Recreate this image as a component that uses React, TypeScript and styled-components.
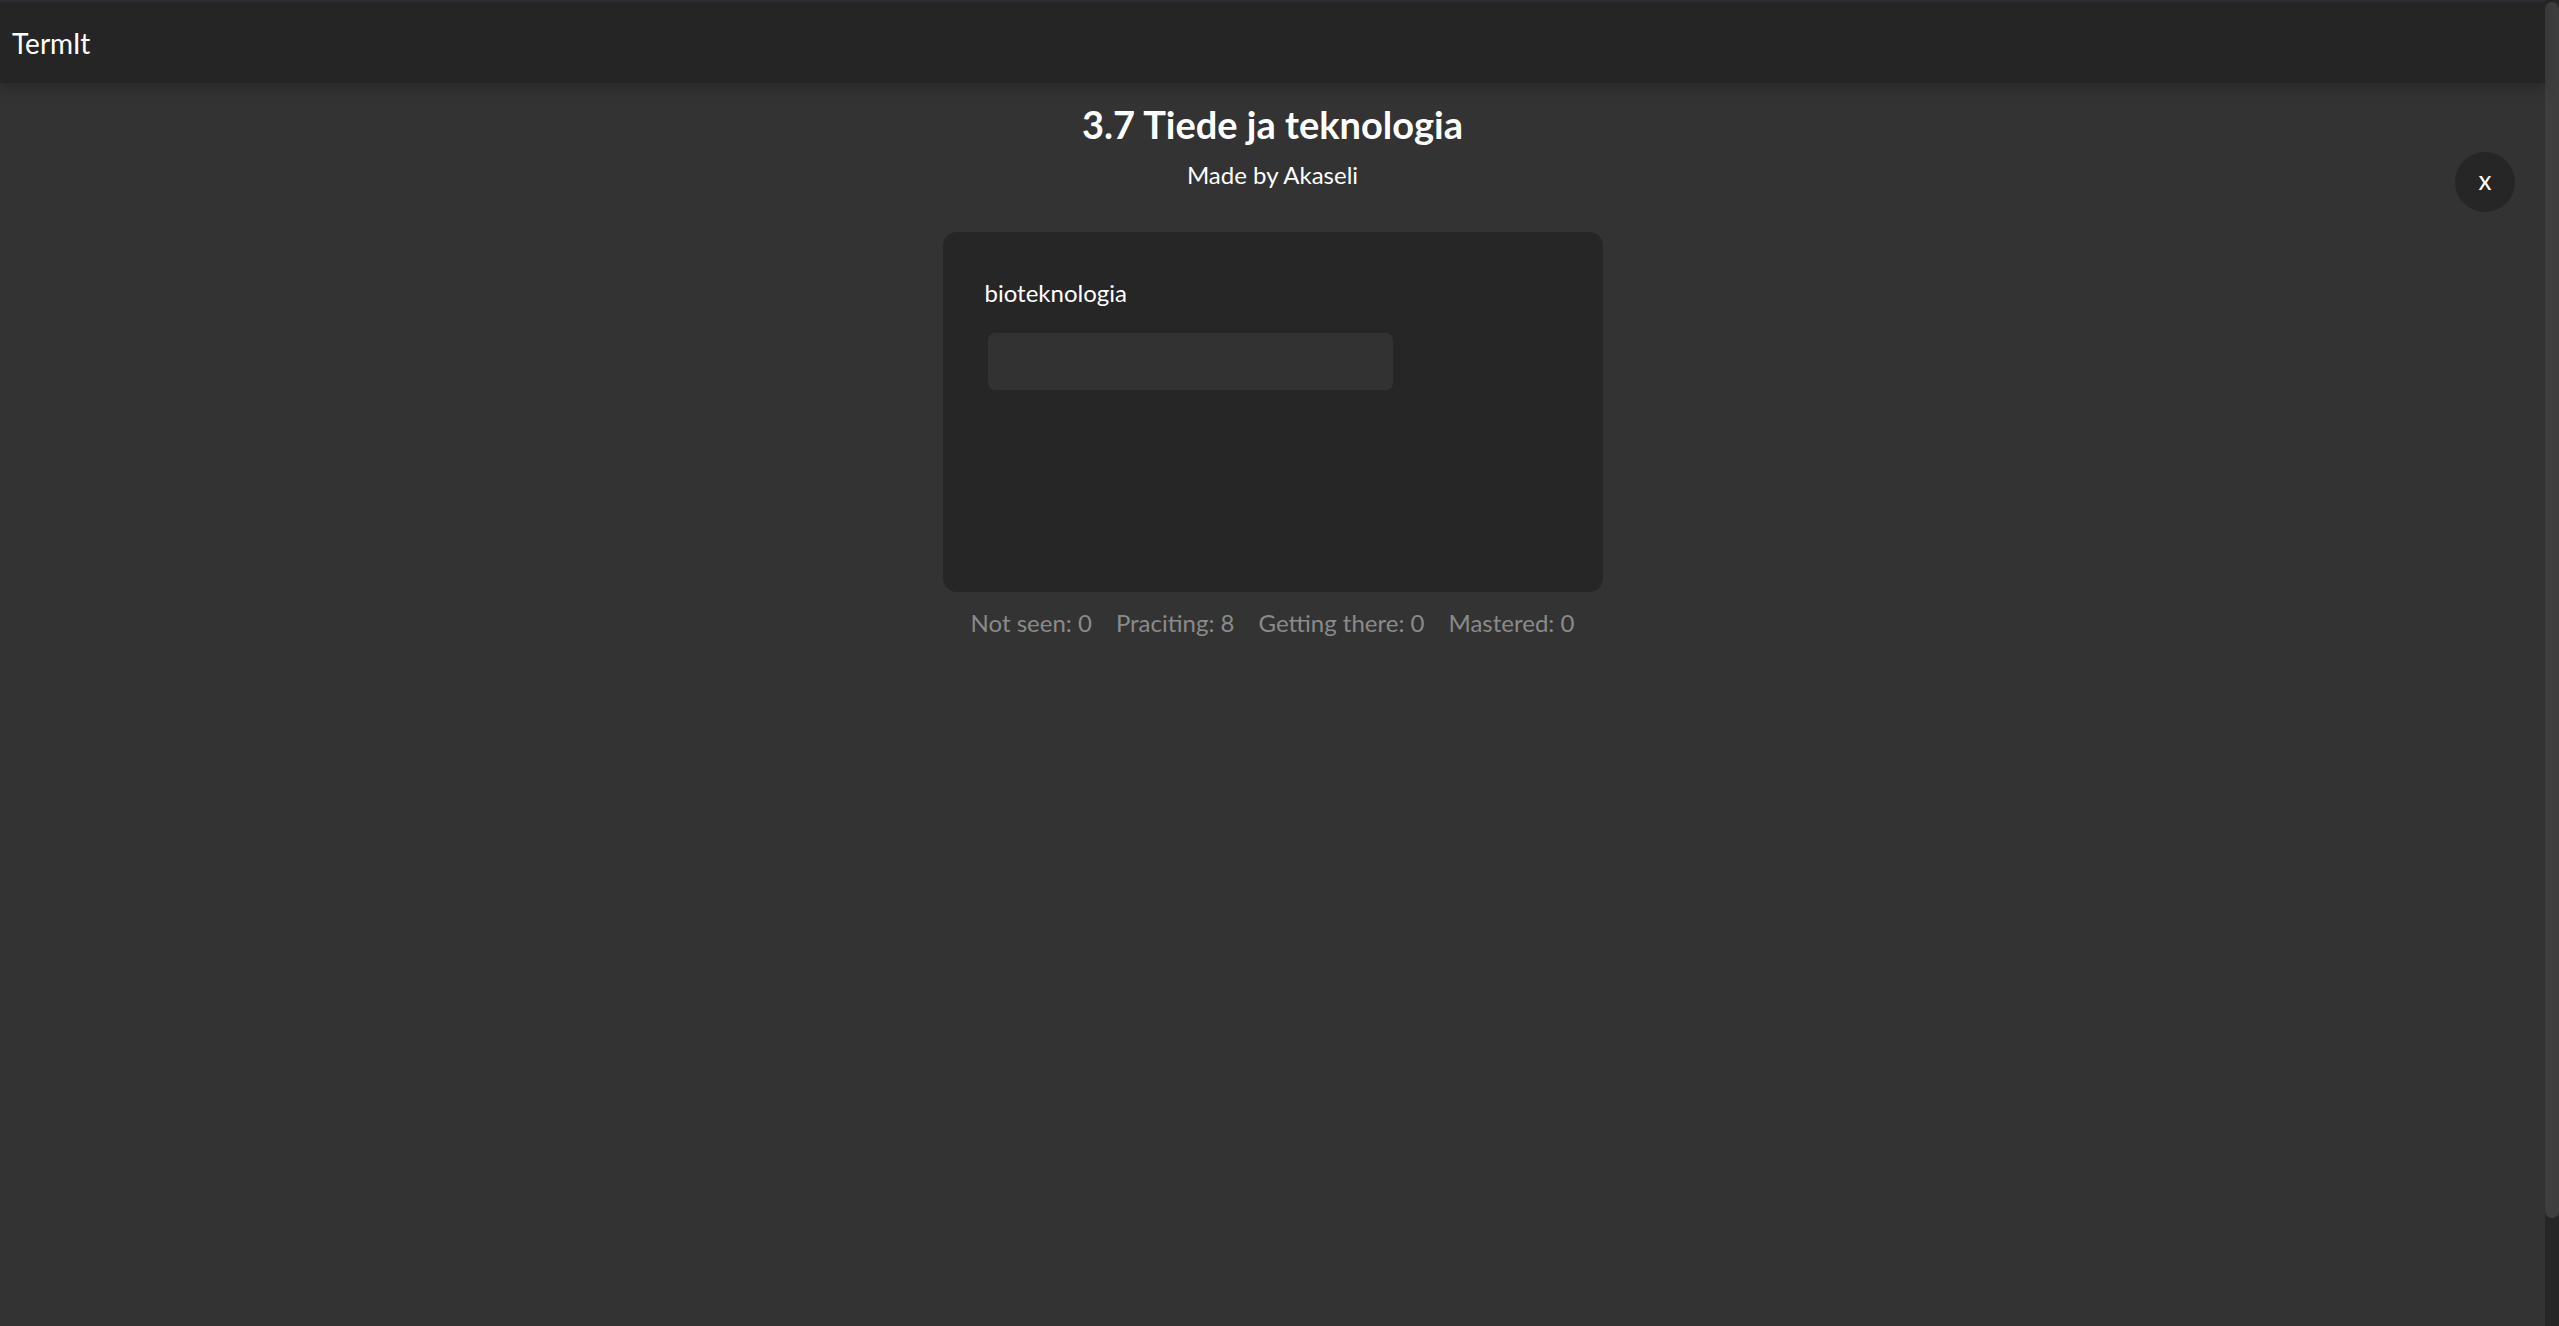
import React, { useState } from 'react';
import styled, { createGlobalStyle } from 'styled-components';

const GlobalStyle = createGlobalStyle`
  html, body {
    margin: 0;
    padding: 0;
    background: #333333;
    font-family: 'Lato', 'Open Sans', sans-serif;
    color: #ffffff;
    overflow: hidden;
  }
`;

const Window = styled.div`
  height: 100vh;
  display: flex;
`;

const Page = styled.div`
  flex: 1;
  display: flex;
  flex-direction: column;
  position: relative;
`;

const Header = styled.header`
  height: 81px;
  background: #252525;
  border-top: 2px solid #2d2d35;
  box-shadow: 0 5px 14px rgba(0, 0, 0, 0.22);
  display: flex;
  align-items: center;
  padding: 0 12px;
  font-size: 28px;
  position: relative;
  z-index: 1;
`;

const Main = styled.main`
  flex: 1;
  display: flex;
  flex-direction: column;
  align-items: center;
  padding-top: 19px;
`;

const Title = styled.h1`
  margin: 0;
  font-size: 38px;
  font-weight: 700;
  line-height: 1.2;
`;

const Subtitle = styled.p`
  margin: 13px 0 0;
  font-size: 24px;
  line-height: 1.2;
`;

const Card = styled.section`
  margin-top: 43px;
  width: 660px;
  height: 360px;
  box-sizing: border-box;
  background: #262626;
  border-radius: 14px;
  padding: 47px 42px;
  display: flex;
  flex-direction: column;
  align-items: flex-start;
`;

const Term = styled.p`
  margin: 0;
  font-size: 24px;
  line-height: 1.2;
`;

const Answer = styled.input`
  margin: 25px 0 0 3px;
  width: 405px;
  height: 57px;
  box-sizing: border-box;
  background: #323232;
  border: none;
  border-radius: 7px;
  outline: none;
  color: #fff;
  font-family: inherit;
  font-size: 22px;
  padding: 0 14px;
`;

const Stats = styled.div`
  margin-top: 17px;
  display: flex;
  gap: 24px;
  font-size: 24px;
  line-height: 1.2;
  color: #8a8a8a;
`;

const CloseButton = styled.button`
  position: absolute;
  top: 152px;
  right: 30px;
  width: 60px;
  height: 60px;
  border-radius: 50%;
  border: none;
  background: #262626;
  color: #fff;
  font-family: inherit;
  font-size: 26px;
  line-height: 1;
  cursor: pointer;
  display: flex;
  align-items: center;
  justify-content: center;
  padding: 0 0 4px;
`;

// page scrollbar, the way the browser draws it in the capture
const ScrollTrack = styled.div`
  width: 14px;
  background: #262626;
  display: flex;
  flex-direction: column;
  padding-top: 2px;
`;

const ScrollThumb = styled.div`
  height: 1216px;
  background: #3e3e3e;
  border-radius: 7px;
`;

const stats = [
  { label: 'Not seen', value: 0 },
  { label: 'Praciting', value: 8 },
  { label: 'Getting there', value: 0 },
  { label: 'Mastered', value: 0 },
];

export default function App() {
  const [answer, setAnswer] = useState('');

  return (
    <Window>
      <GlobalStyle />
      <Page>
        <Header>TermIt</Header>
        <Main>
          <Title>3.7 Tiede ja teknologia</Title>
          <Subtitle>Made by Akaseli</Subtitle>
          <Card>
            <Term>bioteknologia</Term>
            <Answer value={answer} onChange={(e) => setAnswer(e.target.value)} />
          </Card>
          <Stats>
            {stats.map((s) => (
              <span key={s.label}>
                {s.label}: {s.value}
              </span>
            ))}
          </Stats>
        </Main>
        <CloseButton>x</CloseButton>
      </Page>
      <ScrollTrack>
        <ScrollThumb />
      </ScrollTrack>
    </Window>
  );
}
